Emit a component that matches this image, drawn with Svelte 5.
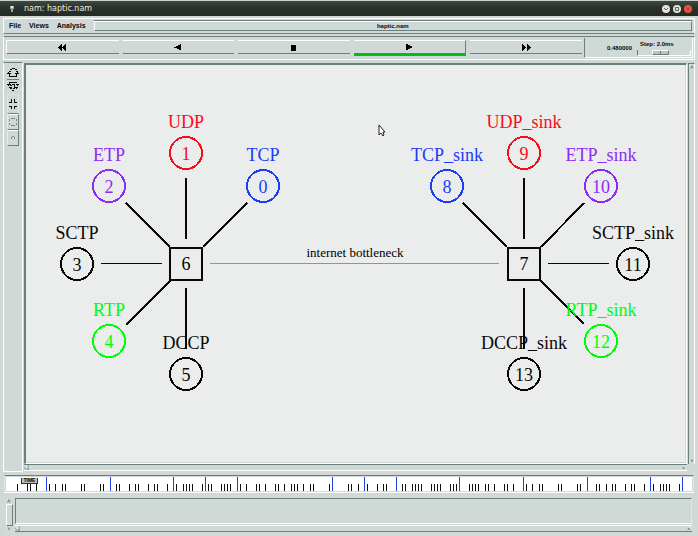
<script>
  const RED = '#fb0a18';
  const BLUE = '#1c3cf6';
  const PURPLE = '#8a2cf8';
  const GREEN = '#00fb08';
  const BLACK = '#080808';

  const nodes = [
    { id: 0, label: 'TCP', x: 263, y: 186, color: BLUE },
    { id: 1, label: 'UDP', x: 186, y: 153, color: RED },
    { id: 2, label: 'ETP', x: 109, y: 186, color: PURPLE },
    { id: 3, label: 'SCTP', x: 77, y: 264, color: BLACK },
    { id: 4, label: 'RTP', x: 109, y: 341, color: GREEN },
    { id: 5, label: 'DCCP', x: 186, y: 374, color: BLACK },
    { id: 8, label: 'TCP_sink', x: 447, y: 186, color: BLUE },
    { id: 9, label: 'UDP_sink', x: 524, y: 153, color: RED },
    { id: 10, label: 'ETP_sink', x: 601, y: 186, color: PURPLE },
    { id: 11, label: 'SCTP_sink', x: 633, y: 264, color: BLACK },
    { id: 12, label: 'RTP_sink', x: 601, y: 341, color: GREEN },
    { id: 13, label: 'DCCP_sink', x: 524, y: 374, color: BLACK }
  ];
  const hubs = [{ id: 6, x: 186, y: 264 }, { id: 7, x: 524, y: 264 }];
  const links = [
    [126, 203, 170, 247], [186, 178, 186, 239], [247, 203, 203, 247],
    [170, 281, 126, 325], [186, 288, 186, 349],
    [463, 203, 507, 247], [524, 178, 524, 239], [584, 203, 541, 247],
    [540, 280, 584, 324], [524, 288, 524, 349]
  ];
  const thinLinks = [[101, 162], [548, 609]];

  const packets = [
    17, 27, 30, 36, 49, 55, 62, 65, 81, 84, 100, 103, 116, 119, 129, 135, 138, 148, 154, 157, 167,
    176, 183, 186, 189, 192, 202, 208, 211, 221, 224, 227, 230, 240, 246, 256, 259, 265, 275, 278,
    284, 291, 294, 297, 303, 310, 313, 329, 348, 351, 358, 367, 377, 383, 386, 402, 405, 412, 415,
    418, 421, 431, 434, 437, 440, 450, 453, 456, 469, 472, 475, 478, 485, 488, 494, 504, 507, 513,
    526, 532, 539, 542, 558, 561, 577, 580, 596, 599, 606, 612, 615, 625, 631, 634, 644, 653, 660,
    663, 666, 669, 679
  ];
  const marks = [46, 110, 173, 205, 237, 332, 364, 396, 459, 523, 587, 650, 682];

  const controls = [
    { name: 'Rewind', d: 'M4 0v7L0 3.5zM8 0v7L4 3.5z' },
    { name: 'Play backward', d: 'M7 0v6H5V5H3V4H0V3h2V2h2V1h2V0z' },
    { name: 'Stop', d: 'M2 1h5v6H2z' },
    { name: 'Play forward', d: 'M1 0h2v1h2v1h2v2H5v1H3v1H1z', active: true },
    { name: 'Fast forward', d: 'M0 0l4 3.5L0 7zM5 0l4 3.5L5 7z' }
  ];

  let step = $state(40);
</script>

{#snippet arrow(dir, name)}
  <button class="arrow" aria-label={name}>
    <svg width="5" height="5" viewBox="0 0 6 6">
      {#if dir === 'left'}
        <path d="M0 3L5 0v6z" fill="#e3eae7" /><path d="M5 0v6L0 3" fill="none" stroke="#6c7f7c" />
      {:else if dir === 'right'}
        <path d="M0 0l5 3-5 3z" fill="#8fa19c" /><path d="M0 6V0l5 3" fill="none" stroke="#fff" />
      {:else if dir === 'up'}
        <path d="M0 5l3-5 3 5z" fill="#8fa19c" /><path d="M0 5l3-5" fill="none" stroke="#fff" />
      {:else}
        <path d="M0 0h6L3 5z" fill="#8fa19c" /><path d="M6 0H0l3 5" fill="none" stroke="#fff" />
      {/if}
    </svg>
  </button>
{/snippet}

<div class="window">
  <header class="title">
    <svg class="app" width="6" height="8" viewBox="0 0 6 8"><path d="M1 1h4v3H4v3H2V4H1z" fill="#9aa39d" /><path d="M2 1h2v2H2z" fill="#e3e8e4" /></svg>
    <h1>nam: haptic.nam</h1>
    <div class="wm">
      <button aria-label="Minimize"><svg viewBox="0 0 8 8"><path d="M2 3l2 2 2-2" /></svg></button>
      <button aria-label="Maximize"><svg viewBox="0 0 8 8"><path d="M2.5 2.5h3v3h-3z" /></svg></button>
      <button class="close" aria-label="Close"><svg viewBox="0 0 8 8"><path d="M2.5 2.5l3 3m0-3l-3 3" /></svg></button>
    </div>
  </header>

  <nav class="menubar">
    <button>File</button>
    <button>Views</button>
    <button>Analysis</button>
    <div class="file">haptic.nam</div>
  </nav>

  <section class="toolbar">
    <div class="controls">
      {#each controls as c}
        <button class:active={c.active} aria-label={c.name}>
          <svg width="9" height="7" viewBox="0 0 9 7" shape-rendering="crispEdges"><path d={c.d} /></svg>
        </button>
      {/each}
    </div>
    <div class="status">
      <output>0.480000</output>
      <div class="step">
        <label for="step">Step: 2.0ms</label>
        <input id="step" type="range" bind:value={step} />
      </div>
    </div>
  </section>

  <main>
    <aside>
      <button aria-label="Zoom in">
        <svg width="12" height="10" viewBox="0 0 12 10"><path d="M5 .5h3M3 1.5h2M8 1.5h2M2 3.5h2M9 3.5h2M0 5.500h4M8 5.500h4M2 8.500h8M2.500 5v3M9.500 5v3M1.500 4v1M10.500 4v1" /></svg>
      </button>
      <button aria-label="Zoom out">
        <svg width="12" height="10" viewBox="0 0 12 10"><path d="M2 .5h8M0 2.500h4M5 2.500h3M9 2.500h3M1 3.500h1M3 3.500h2M10 3.500h1M2 5.500h3M7 5.500h4M3 6.500h2M6 6.500h2M9 6.500h1M5 8.500h2M2.500 1v1M7.500 3v2" /></svg>
      </button>
      <button class="raised" aria-label="Edit">
        <svg width="12" height="14" viewBox="0 0 12 14"><path d="M4.500 2v4M7.500 2v4M2 5.500h3M7 5.500h3M4.500 9v3M7.500 9v3M2 9.500h3M7 9.500h3" /></svg>
      </button>
      <button class="raised dim" aria-label="Node size up">
        <svg width="12" height="10" viewBox="0 0 12 10"><path d="M4 1.500h4M4 8.500h4M2.500 2v2M9.500 2v2M2.500 6v2M9.500 6v2" /></svg>
      </button>
      <button class="raised dim" aria-label="Node size down">
        <svg width="12" height="10" viewBox="0 0 12 10"><path d="M5 3.500h2M4.500 4v2M7.500 4v2" /></svg>
      </button>
    </aside>

    <div class="view">
      <div class="viewrow">
        <div class="canvas">
          <svg viewBox="26 65 660 398" aria-label="Network topology">
            <g shape-rendering="crispEdges" stroke={BLACK}>
              {#each links as [x1, y1, x2, y2]}
                <line {x1} {y1} {x2} {y2} stroke-width="2" />
              {/each}
              {#each thinLinks as [x1, x2]}
                <line {x1} {x2} y1="263.5" y2="263.5" />
              {/each}
              <line x1="210" x2="499" y1="263.5" y2="263.5" stroke={GREEN} />
            </g>
            <text class="link" x="355" y="257">internet bottleneck</text>
            {#each hubs as h}
              <rect x={h.x - 16} y={h.y - 16} width="32" height="32" fill="none" stroke={BLACK} stroke-width="2" shape-rendering="crispEdges" />
              <text x={h.x} y={h.y + 6}>{h.id}</text>
            {/each}
            {#each nodes as n}
              <circle cx={n.x} cy={n.y} r="16" fill="none" stroke={n.color} stroke-width="2" shape-rendering="crispEdges" />
              <text x={n.x} y={n.y + 7} fill={n.color}>{n.id}</text>
              <text x={n.x} y={n.y - 25} fill={n.color}>{n.label}</text>
            {/each}
            <path d="M379 125v10l2-2 2 3 1-1-1-3h2z" fill="#fff" stroke="#222" />
          </svg>
        </div>
        <div class="bar vertical">{@render arrow('up', 'Scroll up')}{@render arrow('down', 'Scroll down')}</div>
      </div>
      <div class="bar horizontal">{@render arrow('left', 'Scroll left')}{@render arrow('right', 'Scroll right')}</div>
    </div>
  </main>

  <section class="timeline">
    <svg viewBox="6 477 686 14" preserveAspectRatio="none" shape-rendering="crispEdges" aria-label="Packet timeline">
      {#each packets as x}<rect {x} y="484" width="1" height="7" fill="#111" />{/each}
      {#each marks as x}<rect {x} y="477" width="1" height="14" fill="#203ee6" />{/each}
    </svg>
    <button class="bubble">TIME</button>
  </section>

  <footer>
    <div class="bar vertical full">{@render arrow('up', 'Scroll log up')}<span></span>{@render arrow('down', 'Scroll log down')}</div>
    <div class="log">
      <div class="pane"></div>
      <div class="bar horizontal">{@render arrow('left', 'Scroll log left')}{@render arrow('right', 'Scroll log right')}</div>
    </div>
  </footer>
</div>

<style>
  :global(body) { margin: 0; background: #d1d9d6; }
  .window {
    --dark: #6c7f7f;
    --light: #fff;
    --face: #d1d9d6;
    box-sizing: border-box;
    display: flex;
    flex-direction: column;
    min-height: 100vh;
    padding-bottom: 4px;
    background: var(--face);
    color: #080808;
    font: bold 7px/8px "Liberation Sans", Arial, sans-serif;
  }
  .window :global(*) { box-sizing: border-box; }
  button { margin: 0; padding: 0; border: 0; background: none; color: inherit; font: inherit; }
  svg { display: block; flex: none; }

  .title {
    display: flex;
    align-items: center;
    height: 16px;
    padding: 0 6px 0 9px;
    border-top: 1px solid #c8d0cc;
    background: linear-gradient(#3d4a42, #2a302b 45%, #262b26);
    color: #eeeeda;
  }
  h1 { flex: 1; margin: 0 0 0 9px; font: 8px/14px "DejaVu Sans", sans-serif; }
  .wm { display: flex; gap: 3px; }
  .wm button { width: 8px; height: 8px; border-radius: 50%; background: #e4e4dc; }
  .wm .close { background: #f3512f; }
  .wm path { fill: none; stroke: #5c605a; }

  .menubar {
    display: flex;
    align-items: center;
    gap: 8px;
    height: 16px;
    margin: 2px 3px 0;
    padding: 0 2px 0 5px;
    border: 1px solid var(--light);
    border-bottom-color: var(--dark);
  }
  .file {
    flex: 1;
    height: 10px;
    border: 1px solid var(--light);
    border-bottom-color: var(--dark);
    border-right-color: var(--dark);
    box-shadow: 0 -1px var(--dark);
    font-size: 6px;
    line-height: 9px;
    text-align: center;
  }

  .toolbar {
    display: flex;
    height: 24px;
    margin: 2px 3px 0;
    border: 1px solid var(--light);
    border-top-color: var(--dark);
  }
  .controls { flex: 1; display: flex; gap: 4px; padding: 3px 2px 2px; }
  .controls button {
    flex: 1;
    display: flex;
    justify-content: center;
    height: 14px;
    padding-top: 3px;
    border-top: 1px solid var(--light);
    border-bottom: 1px solid var(--dark);
  }
  .controls button:first-child { border-left: 1px solid var(--light); }
  .controls .active { height: 16px; border-right: 1px solid var(--dark); border-bottom: 3px solid #00bf1c; }
  .status {
    display: flex;
    align-items: center;
    gap: 5px;
    width: 109px;
    margin: 1px 1px 1px 0;
    padding: 0 1px 0 22px;
    border-left: 1px solid var(--dark);
    border-bottom: 1px solid var(--light);
    border-right: 1px solid var(--light);
    font-size: 6px;
  }
  .step { flex: 1; display: flex; flex-direction: column; }
  .step label { padding-left: 3px; }
  input {
    appearance: none;
    width: 100%;
    height: 6px;
    margin: 2px 0 0;
    border: 1px solid var(--light);
    border-top: 0;
    border-left-color: var(--dark);
    background: none;
  }
  input::-webkit-slider-thumb {
    appearance: none;
    width: 17px;
    height: 5px;
    border: 1px solid var(--light);
    border-bottom-color: var(--dark);
    border-right-color: var(--dark);
    background: linear-gradient(90deg, #b7c4c0 7px, var(--dark) 7px 8px, #b7c4c0 8px);
  }

  main { flex: 1; display: flex; gap: 1px; margin: 2px 3px 0; }
  aside {
    display: flex;
    flex-direction: column;
    align-items: center;
    width: 20px;
    padding-top: 3px;
    border: 1px solid var(--light);
    border-top-color: var(--dark);
  }
  aside button {
    display: flex;
    align-items: center;
    justify-content: center;
    width: 12px;
    height: 14px;
    border: 0 solid transparent;
  }
  aside button:first-child { border-bottom: 1px solid var(--dark); }
  aside .raised { height: 16px; border-width: 1px; border-color: #fff var(--dark) var(--dark) #e4eae8; }
  aside .raised:nth-child(3) { height: 20px; border-color: #e0e6e4; border-bottom-color: var(--dark); }
  aside path { fill: none; stroke: #080808; }
  aside .dim path { stroke: #7b8a87; }

  .view { flex: 1; display: flex; flex-direction: column; padding: 1px 0; }
  .viewrow { flex: 1; display: flex; gap: 1px; }
  .canvas {
    flex: 1;
    border: 1px solid var(--light);
    border-top: 2px solid var(--dark);
    border-left: 2px solid var(--dark);
    background: #ebedec;
    box-shadow: inset -1px -1px #cfd5d3;
  }
  .canvas svg { width: 100%; height: 100%; }
  text { font: 18px "Liberation Serif", "Times New Roman", serif; text-anchor: middle; }
  .link { font-size: 13px; }

  .bar { display: flex; justify-content: space-between; }
  .bar.vertical { flex-direction: column; width: 7px; border-left: 1px solid var(--dark); border-right: 1px solid var(--light); border-top: 1px solid var(--dark); }
  .bar.horizontal { height: 7px; margin-right: 8px; border-top: 1px solid var(--dark); border-bottom: 1px solid var(--light); }
  .arrow { width: 5px; height: 5px; }

  .timeline {
    position: relative;
    height: 18px;
    margin: 3px 4px 0;
    border: 1px solid #e6ebe9;
    border-top: 1px solid var(--dark);
    border-bottom: 1px solid var(--light);
    padding: 1px;
  }
  .timeline svg { width: 100%; height: 100%; background: #fff; }
  .bubble {
    position: absolute;
    left: 16px;
    top: 2px;
    width: 17px;
    height: 6px;
    border: 1px solid #2c3330;
    border-top-width: 0;
    background: #b5c1bd;
    font-size: 5px;
    line-height: 5px;
  }

  footer { display: flex; gap: 2px; height: 34px; margin: 5px 6px 0; }
  .bar.full { border: 0; }
  .full span { flex: 1; margin: 1px 0; border: 1px solid var(--light); border-right-color: var(--dark); border-bottom-color: var(--dark); }
  .log { flex: 1; display: flex; flex-direction: column; }
  .pane { flex: 1; border: 1px solid #e2e7e5; border-top-color: var(--dark); border-left-color: var(--dark); border-bottom: 1px solid var(--light); }
  .log .bar { margin: 1px 0 0; border-top-color: var(--light); border-bottom-color: var(--dark); }
</style>
